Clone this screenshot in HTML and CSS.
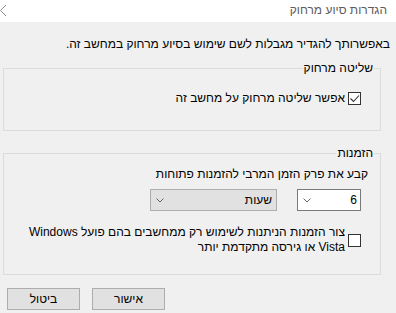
FILE: index.html
```html
<!DOCTYPE html>
<html lang="he" dir="rtl">
<head>
    <meta charset="UTF-8">
    <title>הגדרות סיוע מרחוק</title>
    <link rel="stylesheet" href="styles.css">
</head>
<body>
    <div class="titlebar">
        <span class="title">הגדרות סיוע מרחוק</span>
        <svg class="back" width="8" height="16" viewBox="0 0 8 16"><polyline points="6,2 0.5,7.5 6,13" fill="none" stroke="#8a8a8a" stroke-width="1"/></svg>
    </div>
    <div class="main">
        <p class="intro">באפשרותך להגדיר מגבלות לשם שימוש בסיוע מרחוק במחשב זה.</p>

        <fieldset class="group">
            <legend>שליטה מרחוק</legend>
            <label class="check first">
                <span class="box"><svg width="11" height="11" viewBox="0 0 11 11"><polyline points="1.5,5.5 4.5,8.5 10,2.5" fill="none" stroke="#333" stroke-width="1.1"/></svg></span>
                <span>אפשר שליטה מרחוק על מחשב זה</span>
            </label>
        </fieldset>

        <fieldset class="group second">
            <legend>הזמנות</legend>
            <div class="lbl">קבע את פרק הזמן המרבי להזמנות פתוחות</div>
            <div class="selects">
                <div class="sel num">
                    <span>6</span>
                    <svg width="8" height="5" viewBox="0 0 8 5"><polyline points="0.5,0.5 4,4 7.5,0.5" fill="none" stroke="#666" stroke-width="1"/></svg>
                </div>
                <div class="sel unit">
                    <span>שעות</span>
                    <svg width="8" height="5" viewBox="0 0 8 5"><polyline points="0.5,0.5 4,4 7.5,0.5" fill="none" stroke="#666" stroke-width="1"/></svg>
                </div>
            </div>
            <label class="check vista">
                <span class="box"></span>
                <span>צור הזמנות הניתנות לשימוש רק ממחשבים בהם פועל Windows<br>Vista או גירסה מתקדמת יותר</span>
            </label>
        </fieldset>

        <div class="buttons">
            <button type="button" class="btn">אישור</button>
            <button type="button" class="btn">ביטול</button>
        </div>
    </div>
</body>
</html>
```

FILE: styles.css
```css
*{margin:0;padding:0;box-sizing:border-box;}
body{background:#fff;font-family:"Liberation Sans",Arial,sans-serif;font-size:12px;line-height:15px;color:#000;width:396px;height:313px;overflow:hidden;}
.titlebar{height:22px;display:flex;align-items:center;justify-content:space-between;padding-right:9px;}
.title{color:#5c5c5c;margin-top:-2px;}
.back{margin-top:-1px;}
.main{background:#f0f0f0;height:291px;padding:15px 6px 0 3px;}
.intro{margin-bottom:9px;}
.group{border:1px solid #dcdcdc;margin-right:9px;padding:0 6px;}
.group legend{padding:0 1px;}
.check{display:flex;align-items:center;gap:3px;}
.check.first{margin:15px 13px 24px 0;}
.box{width:13px;height:13px;border:1px solid #333;background:#fff;flex:none;display:flex;align-items:center;justify-content:center;}
.second{margin-top:15px;}
.lbl{margin:6px 6px 0 0;}
.selects{display:flex;gap:20px;margin:7px 13px 0 0;}
.sel{height:22px;display:flex;align-items:center;justify-content:space-between;padding:0 3px 0 5px;}
.sel svg{margin-top:1px;}
.num{width:64px;background:#fff;border:1px solid #7a7a7a;}
.unit{width:127px;background:#e1e1e1;border:1px solid #adadad;padding-right:4px;}
.check.vista{margin:14px 13px 19px 0;}
.buttons{display:flex;gap:12px;justify-content:flex-end;margin:13px 0 0 4px;}
.btn{width:73px;height:22px;background:#e1e1e1;border:1px solid #adadad;font:inherit;color:#000;}
```
